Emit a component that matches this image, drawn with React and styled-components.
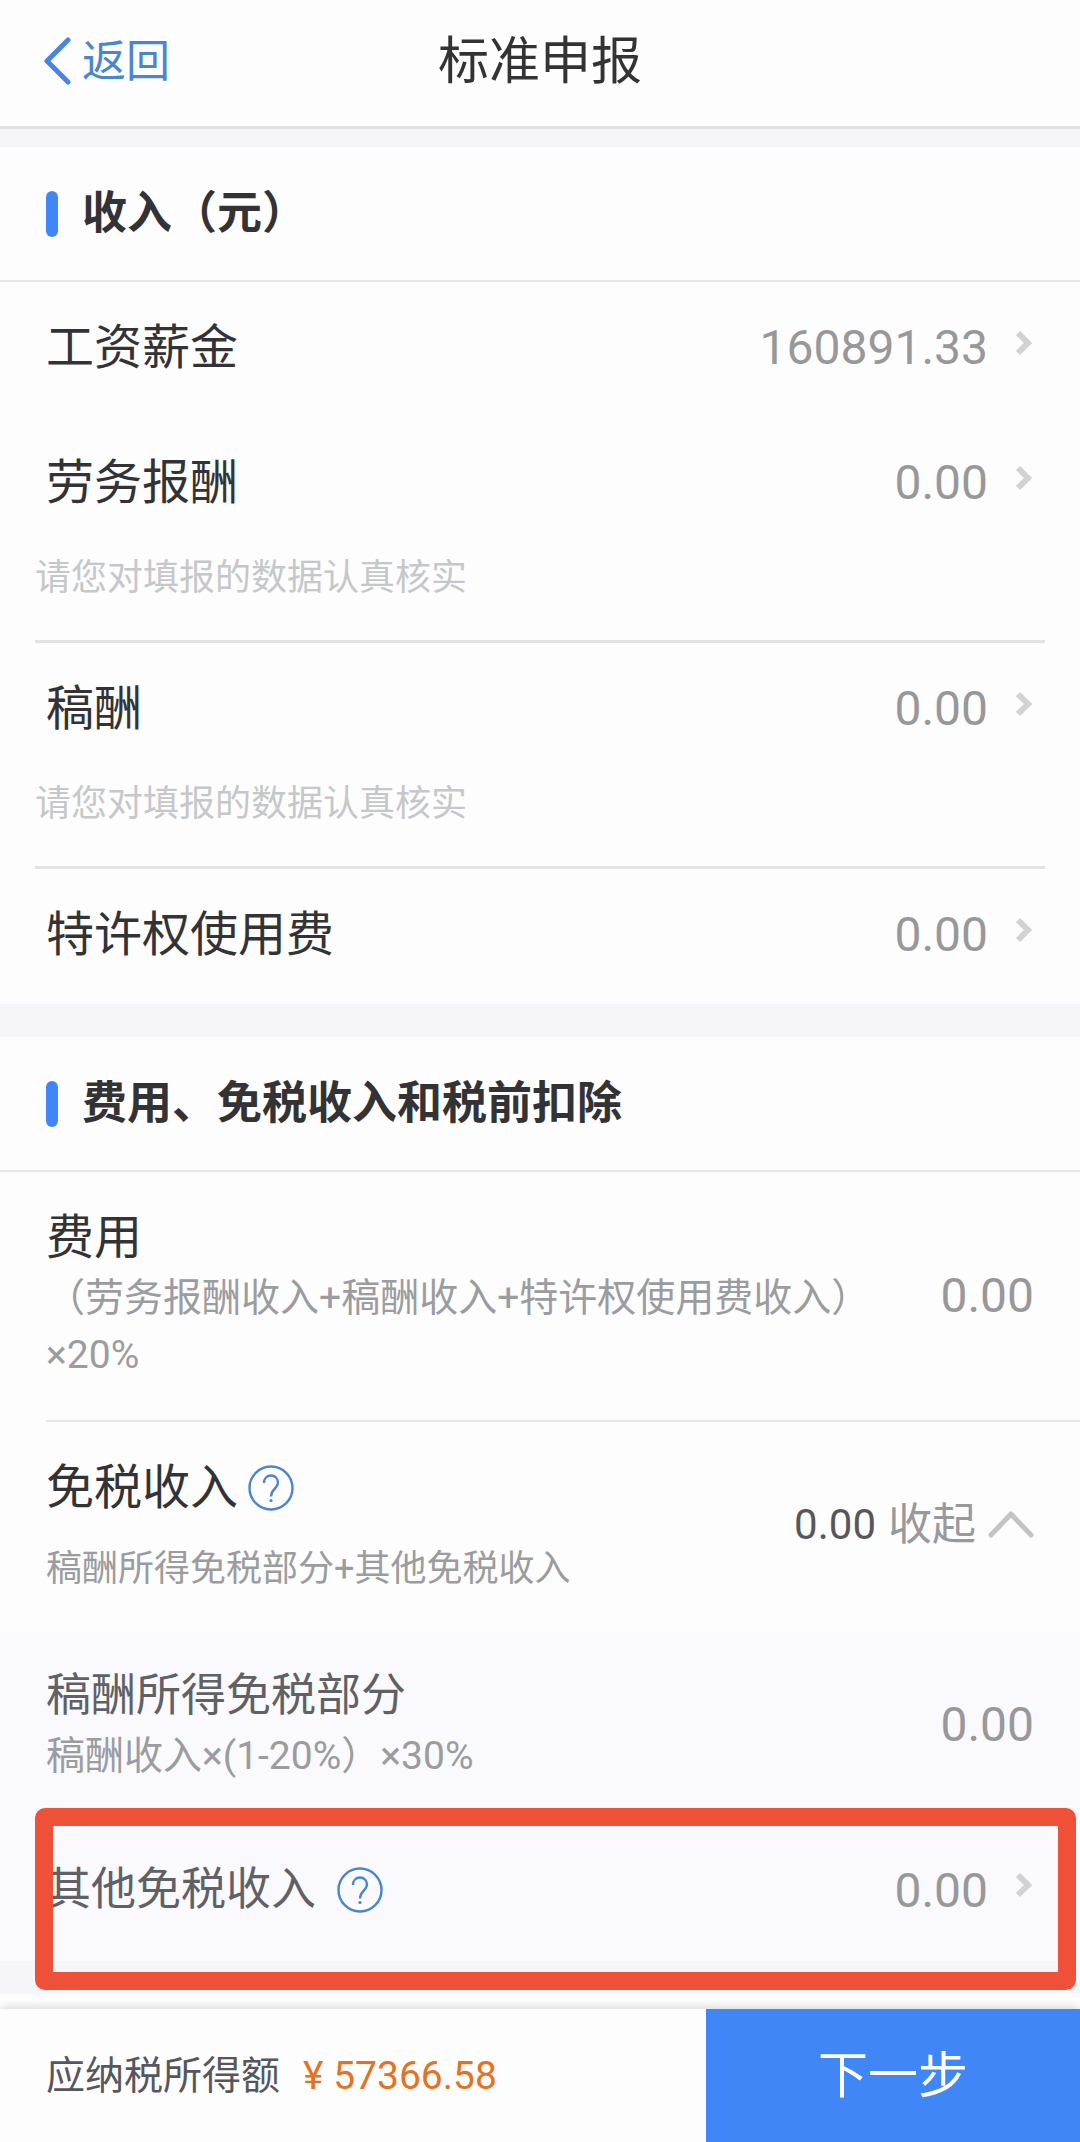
import React, { useState } from 'react';
import styled, { createGlobalStyle } from 'styled-components';

const GlobalStyle = createGlobalStyle`
  * {
    box-sizing: border-box;
  }

  body {
    margin: 0;
    background: #fdfdfd;
    font-family: Roboto, "Noto Sans CJK SC", sans-serif;
    color: #333335;
  }

  button {
    padding: 0;
    border: none;
    background: none;
    color: inherit;
    font: inherit;
    text-align: left;
    cursor: pointer;
  }

  svg {
    display: block;
    flex: none;
  }
`;

const Page = styled.div`
  display: flex;
  flex-direction: column;
  min-height: 100vh;
`;

const Header = styled.header`
  display: grid;
  grid-template-columns: 1fr auto 1fr;
  align-items: center;
  padding: 30px 44px 32px;
  border-bottom: 3px solid #e3e3e5;
`;

const BackButton = styled.button`
  display: flex;
  align-items: center;
  gap: 10px;
  color: #4a86cc;
  font-size: 44px;
  line-height: 64px;
`;

const Title = styled.h1`
  margin: 0;
  font-size: 51px;
  font-weight: 400;
  line-height: 64px;
`;

const Gap = styled.div`
  height: ${({ $height }) => $height}px;
  background: #f5f5fa;
`;

const SectionTitle = styled.h2`
  display: flex;
  align-items: center;
  gap: 24px;
  margin: 0;
  padding: 35px 46px 34px;
  border-bottom: 2px solid #e6e6e8;
  font-size: 45px;
  font-weight: 700;
  line-height: 64px;

  &::before {
    content: '';
    width: 12px;
    height: 46px;
    border-radius: 6px;
    background: #4086f6;
  }
`;

const LinkRow = styled.button`
  display: flex;
  align-items: center;
  justify-content: space-between;
  width: 100%;
  padding: 32px 46px 35px;
  font-size: 48px;
  line-height: 68px;
`;

const Hint = styled.p`
  margin: 0 35px;
  padding-bottom: 36px;
  border-bottom: 3px solid #e3e3e5;
  color: #c6c7ca;
  font-size: 36px;
  line-height: 52px;
`;

const Value = styled.span`
  color: #98989a;
  font-size: 48px;
`;

const ValueLink = styled.span`
  display: flex;
  align-items: center;
  gap: 28px;
`;

const DetailRow = styled.div`
  display: flex;
  align-items: center;
  justify-content: space-between;
  gap: 60px;
  padding: 34px 46px 36px;
`;

const Divider = styled.hr`
  margin: 0 0 0 46px;
  border: none;
  border-top: 2px solid #e6e6e8;
`;

const Label = styled.div`
  display: flex;
  align-items: center;
  gap: ${({ $gap }) => $gap || 10}px;
  font-size: ${({ $sub }) => ($sub ? 45 : 48)}px;
  line-height: 64px;
  color: ${({ $sub }) => ($sub ? '#606164' : '#333335')};
`;

const Formula = styled.p`
  margin: 0;
  color: #9b9c9f;
  font-size: 39px;
  line-height: 57px;
`;

const Summary = styled.p`
  margin: 24px 0 0;
  color: #9b9c9f;
  font-size: 36px;
  line-height: 50px;
`;

const Toggle = styled.button`
  display: flex;
  align-items: center;
  gap: 12px;
  color: #98999c;
  font-size: 44px;
  line-height: 64px;
`;

const ToggleValue = styled.span`
  color: #56575d;
  font-size: 42px;
`;

const SubList = styled.div`
  background: #f9f9fe;
`;

const HighlightRow = styled.div`
  position: relative;
  padding: 3px 0;
`;

// red frame lying over the row
const Frame = styled.div`
  position: absolute;
  inset: -13px 4px -29px 35px;
  border: 18px solid #ee5038;
  border-radius: 10px;
  pointer-events: none;
`;

const IconButton = styled.button`
  color: #4a86cc;
`;

const Footer = styled.footer`
  display: flex;
  margin-top: auto;
  background: #fdfdfd;
  box-shadow: 0 0 10px rgba(0, 0, 0, 0.2);
`;

const Total = styled.div`
  display: flex;
  align-items: center;
  gap: 23px;
  flex: 1;
  padding: 2px 46px 0;
  color: #56575d;
  font-size: 39px;
  line-height: 57px;
`;

const Amount = styled.span`
  color: #e37222;
`;

const NextButton = styled.button`
  flex: 0 0 374px;
  padding: 35px 0 34px;
  background: #4086f6;
  color: #fff;
  font-size: 50px;
  line-height: 64px;
  text-align: center;
`;

const BackIcon = () => (
  <svg width="28" height="50" viewBox="0 0 28 50" fill="none" stroke="#4a84e0" strokeWidth="5" strokeLinecap="round" strokeLinejoin="round">
    <path d="M24 3 3 24l21 21" />
  </svg>
);

const ArrowIcon = () => (
  <svg width="18" height="40" viewBox="0 0 18 40" fill="none" stroke="#d2d2d5" strokeWidth="6">
    <path d="M2 5l10 10L2 25" />
  </svg>
);

const CollapseIcon = ({ open }) => (
  <svg width="46" height="28" viewBox="0 0 46 28" fill="none" stroke="#c4c4c6" strokeWidth="5" strokeLinecap="round" strokeLinejoin="round">
    <path d={open ? 'M3 24 23 3l20 21' : 'M3 4l20 21L43 4'} />
  </svg>
);

const HelpIcon = () => (
  <svg width="46" height="46" viewBox="0 0 46 46" fill="none" stroke="currentColor" strokeWidth="2.4">
    <circle cx="23" cy="23" r="21.5" />
    <path d="M16 18c0-4.5 3-7.5 7-7.5s7 3 7 7c0 6-7 6.5-7 14" />
    <circle cx="23" cy="35.5" r="1.6" fill="currentColor" stroke="none" />
  </svg>
);

const incomes = [
  { name: '工资薪金', value: '160891.33' },
  { name: '劳务报酬', value: '0.00', hint: '请您对填报的数据认真核实' },
  { name: '稿酬', value: '0.00', hint: '请您对填报的数据认真核实' },
  { name: '特许权使用费', value: '0.00' },
];

function App() {
  const [open, setOpen] = useState(true);

  return (
    <Page lang="zh-CN">
      <GlobalStyle />
      <Header>
        <BackButton type="button">
          <BackIcon />
          返回
        </BackButton>
        <Title>标准申报</Title>
      </Header>
      <Gap $height={18} />

      <section>
        <SectionTitle>收入（元）</SectionTitle>
        {incomes.map((item) => (
          <React.Fragment key={item.name}>
            <LinkRow type="button">
              {item.name}
              <ValueLink>
                <Value>{item.value}</Value>
                <ArrowIcon />
              </ValueLink>
            </LinkRow>
            {item.hint && <Hint>{item.hint}</Hint>}
          </React.Fragment>
        ))}
      </section>
      <Gap $height={33} />

      <section>
        <SectionTitle>费用、免税收入和税前扣除</SectionTitle>
        <DetailRow>
          <div>
            <Label>费用</Label>
            <Formula>（劳务报酬收入+稿酬收入+特许权使用费收入）×20%</Formula>
          </div>
          <Value>0.00</Value>
        </DetailRow>
        <Divider />
        <DetailRow>
          <div>
            <Label>
              免税收入
              <IconButton type="button" aria-label="免税收入说明">
                <HelpIcon />
              </IconButton>
            </Label>
            <Summary>稿酬所得免税部分+其他免税收入</Summary>
          </div>
          <Toggle type="button" aria-expanded={open} onClick={() => setOpen(!open)}>
            <ToggleValue>0.00</ToggleValue>
            {open ? '收起' : '展开'}
            <CollapseIcon open={open} />
          </Toggle>
        </DetailRow>
        {open && (
          <SubList>
            <DetailRow>
              <div>
                <Label $sub>稿酬所得免税部分</Label>
                <Formula>稿酬收入×(1-20%）×30%</Formula>
              </div>
              <Value>0.00</Value>
            </DetailRow>
            <HighlightRow>
              <DetailRow>
                <Label $sub $gap={21}>
                  其他免税收入
                  <IconButton type="button" aria-label="其他免税收入说明">
                    <HelpIcon />
                  </IconButton>
                </Label>
                <ValueLink>
                  <Value>0.00</Value>
                  <ArrowIcon />
                </ValueLink>
              </DetailRow>
              <Frame />
            </HighlightRow>
          </SubList>
        )}
      </section>
      <Gap $height={33} />

      <Footer>
        <Total>
          应纳税所得额
          <Amount>¥ 57366.58</Amount>
        </Total>
        <NextButton type="button">下一步</NextButton>
      </Footer>
    </Page>
  );
}

export default App;
